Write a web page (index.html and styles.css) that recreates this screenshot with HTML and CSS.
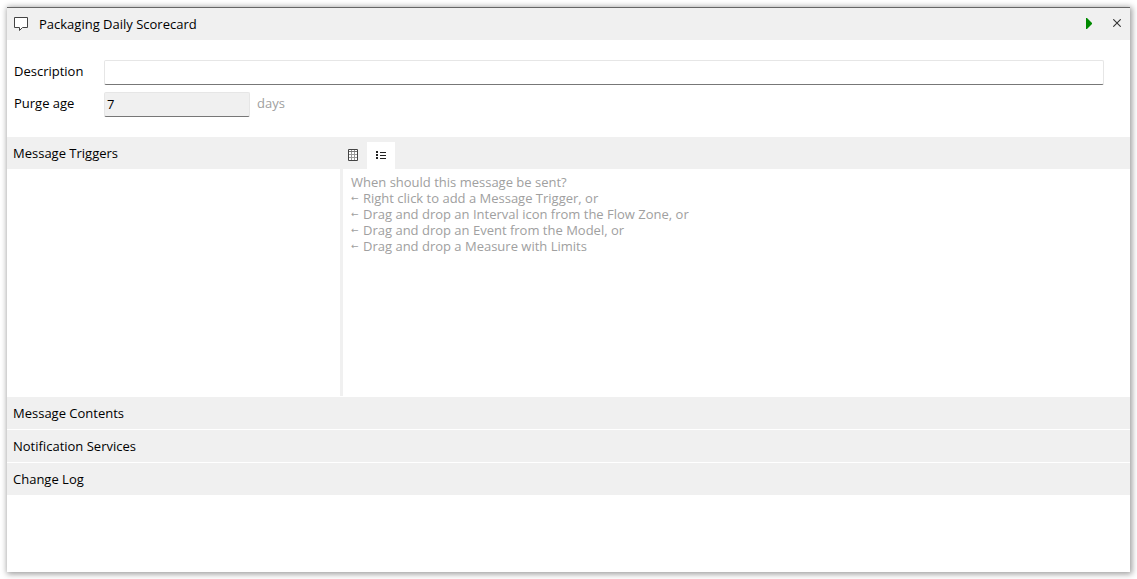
FILE: index.html
```html
<!DOCTYPE html>
<html lang="en">
<head>
<meta charset="utf-8">
<title>Packaging Daily Scorecard</title>
<link rel="stylesheet" href="styles.css">
</head>
<body>
<main class="window">
  <header class="titlebar">
    <svg class="icon" width="14" height="14" viewBox="0 0 14 14" aria-hidden="true"><path d="M.5.5h13v10H8.500L5.500 13.500V10.500h-5z" fill="#fff" stroke="#444"/></svg>
    <h1 class="title">Packaging Daily Scorecard</h1>
    <button class="tool" type="button" aria-label="Run"><svg class="icon" width="6" height="11" viewBox="0 0 6 11"><path d="M0 0h1l5 5v1l-5 5H0z" fill="#008a00"/></svg></button>
    <button class="tool" type="button" aria-label="Close"><svg class="icon" width="8" height="8" viewBox="0 0 8 8"><path d="M.3.3l7.400 7.400M7.700.3L.3 7.700" stroke="#333" stroke-width="1.100"/></svg></button>
  </header>
  <form class="form">
    <div class="row">
      <label class="label" for="description">Description</label>
      <input class="field" id="description" type="text">
    </div>
    <div class="row">
      <label class="label" for="purge">Purge age</label>
      <input class="field field-short" id="purge" type="text" value="7">
      <span class="unit">days</span>
    </div>
  </form>
  <section class="triggers">
    <div class="section-bar">
      <h2 class="section-title">Message Triggers</h2>
      <div class="tabs">
        <button class="tab" type="button" aria-label="Grid view"><svg class="icon" width="10" height="12" viewBox="0 0 10 12"><path fill="#fff" d="M0 0h10v12H0z"/><path d="M3.500 1v10M6.500 1v10M1 5.500h8M1 8.500h8" stroke="#999" fill="none"/><path d="M1 2.500h8" stroke="#777"/><path d="M.5.5h9v11h-9z" stroke="#444" fill="none"/></svg></button>
        <button class="tab tab-active" type="button" aria-label="List view"><svg class="icon" width="10" height="8" viewBox="0 0 10 8"><path d="M0 0h2v2H0zM0 3h2v2H0zM0 6h2v2H0zM4 1h6v1H4zM4 4h6v1H4zM4 7h6v1H4z" fill="#222"/></svg></button>
      </div>
    </div>
    <div class="panes">
      <div class="pane-list"></div>
      <div class="hint">
        <p class="line">When should this message be sent?</p>
        <ul class="hint-list">
          <li class="line"><span class="arrow">←</span>Right click to add a Message Trigger, or</li>
          <li class="line"><span class="arrow">←</span>Drag and drop an Interval icon from the Flow Zone, or</li>
          <li class="line"><span class="arrow">←</span>Drag and drop an Event from the Model, or</li>
          <li class="line"><span class="arrow">←</span>Drag and drop a Measure with Limits</li>
        </ul>
      </div>
    </div>
  </section>
  <div class="sections">
    <button class="section-button" type="button">Message Contents</button>
    <button class="section-button" type="button">Notification Services</button>
    <button class="section-button" type="button">Change Log</button>
  </div>
</main>
</body>
</html>
```
FILE: styles.css
```css
* {
  box-sizing: border-box;
}

body {
  margin: 0;
  padding: 7px;
  min-height: 100vh;
  display: flex;
  background: #fff;
  color: #000;
  font: 13px/16px "Open Sans", "Noto Sans", sans-serif;
}

button,
input {
  font: inherit;
  color: inherit;
}

.window {
  flex: 1;
  min-width: 0;
  display: flex;
  flex-direction: column;
  background: #fff;
  border-top: 1px solid #666;
  box-shadow: 1px 1px 6px 1px rgba(0, 0, 0, 0.4);
}

.icon {
  display: block;
  flex: none;
}

.titlebar {
  display: flex;
  align-items: center;
  height: 32px;
  padding: 0 0 0 7px;
  background: #f0f0f0;
}

.title {
  flex: 1;
  margin: 0 0 0 11px;
  font-size: 13px;
  font-weight: 400;
}

.tool {
  display: flex;
  align-items: center;
  justify-content: center;
  width: 28px;
  height: 32px;
  padding: 0 0 2px 2px;
  border: 0;
  background: none;
}

.form {
  display: flex;
  flex-direction: column;
  gap: 7px;
  padding: 20px 26px 20px 7px;
}

.row {
  display: flex;
  line-height: 22px;
}

.label {
  width: 90px;
}

.field {
  flex: 1;
  min-width: 0;
  height: 25px;
  padding: 0 2px 2px;
  border: 1px solid #e6e6e6;
  border-bottom-color: #777;
  border-radius: 2px;
  background: #fff;
}

.field-short {
  flex: none;
  width: 146px;
  background: #f0f0f0;
}

.unit {
  margin-left: 7px;
  color: #a0a0a0;
}

.section-bar {
  display: flex;
  height: 32px;
  background: #f0f0f0;
}

.section-title {
  width: 332px;
  margin: 0;
  padding-left: 6px;
  font-size: 13px;
  font-weight: 400;
  line-height: 32px;
}

.tabs {
  display: flex;
  align-items: flex-end;
}

.tab {
  display: flex;
  align-items: center;
  justify-content: center;
  width: 28px;
  height: 27px;
  padding: 0 0 1px;
  border: 0;
  background: none;
}

.tab-active {
  background: #fff;
}

.panes {
  display: flex;
  min-height: 228px;
  padding-bottom: 1px;
}

.pane-list {
  width: 336px;
  border-right: 3px solid #f0f0f0;
}

.hint {
  padding: 5px 8px;
  color: #a0a0a0;
}

.line {
  margin: 0;
}

.hint-list {
  margin: 0;
  padding: 0;
  list-style: none;
}

.arrow {
  display: inline-block;
  width: 12px;
  font: 9px/8px "DejaVu Sans", sans-serif;
  vertical-align: 2px;
}

.sections {
  display: flex;
  flex-direction: column;
  gap: 1px;
}

.section-button {
  height: 32px;
  padding: 0 6px;
  border: 0;
  background: #f0f0f0;
  text-align: left;
}
```
